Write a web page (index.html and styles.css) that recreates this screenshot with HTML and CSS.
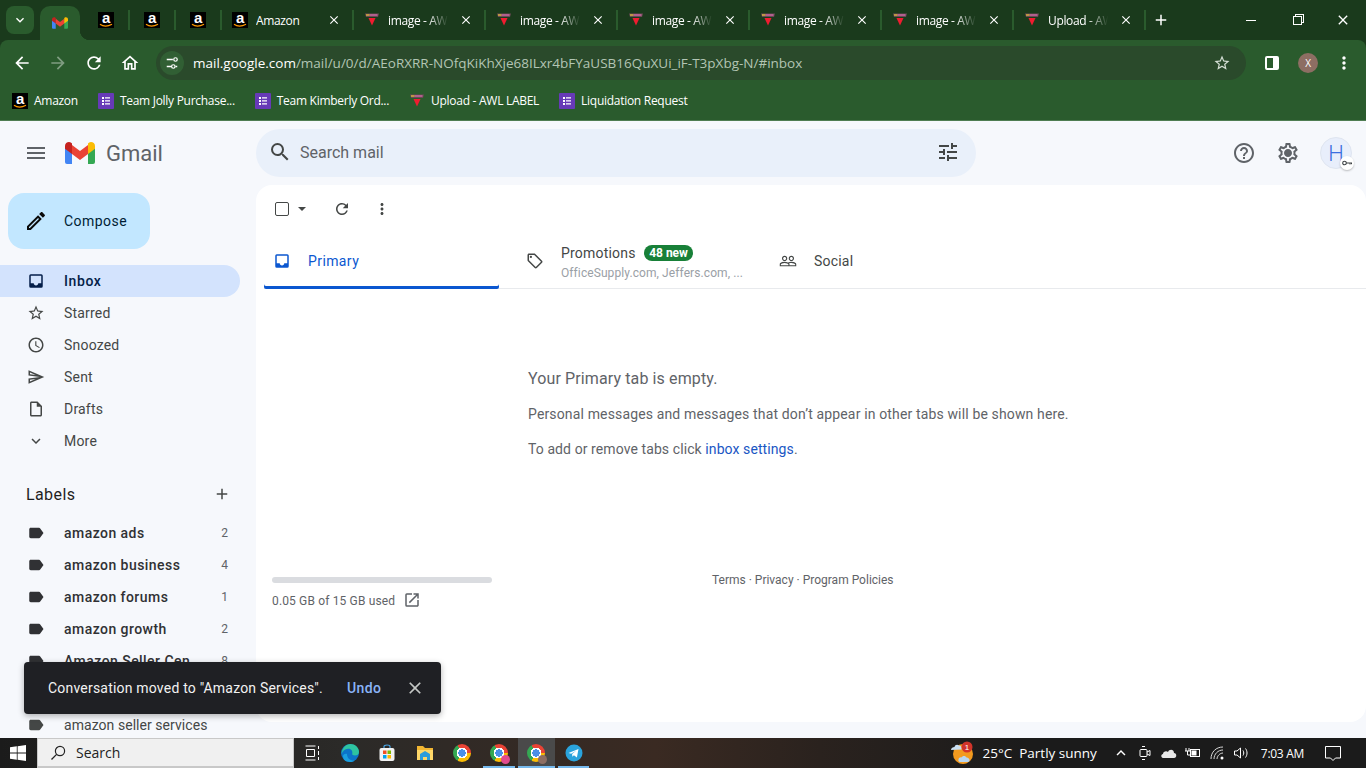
FILE: index.html
```html
<!DOCTYPE html>
<html lang="en">
<head>
    <meta charset="UTF-8">
    <meta name="viewport" content="width=device-width, initial-scale=1.0">
    <title>Gmail - Inbox</title>
    <link rel="stylesheet" href="styles.css">
</head>
<body>
    <svg class="sprite" xmlns="http://www.w3.org/2000/svg">
        <symbol id="i-back" viewBox="0 0 24 24"><path d="M20 11H7.83l5.59-5.59L12 4l-8 8 8 8 1.41-1.41L7.83 13H20v-2z"/></symbol>
        <symbol id="i-forward" viewBox="0 0 24 24"><path d="M12 4l-1.41 1.41L16.17 11H4v2h12.17l-5.58 5.59L12 20l8-8z"/></symbol>
        <symbol id="i-refresh" viewBox="0 0 24 24"><path d="M17.65 6.35A7.958 7.958 0 0 0 12 4c-4.42 0-7.99 3.58-7.99 8s3.57 8 7.99 8c3.73 0 6.84-2.55 7.73-6h-2.08A5.99 5.99 0 0 1 12 18c-3.31 0-6-2.69-6-6s2.69-6 6-6c1.66 0 3.14.69 4.22 1.78L13 11h7V4l-2.35 2.35z"/></symbol>
        <symbol id="i-home" viewBox="0 0 24 24"><path d="M12 5.69l5 4.5V18h-2v-6H9v6H7v-7.81l5-4.5M12 3L2 12h3v8h6v-6h2v6h6v-8h3L12 3z"/></symbol>
        <symbol id="i-star" viewBox="0 0 24 24"><path d="M22 9.24l-7.19-.62L12 2 9.19 8.63 2 9.24l5.46 4.73L5.82 21 12 17.27 18.18 21l-1.63-7.03L22 9.24zM12 15.4l-3.76 2.27 1-4.28-3.32-2.88 4.38-.38L12 6.1l1.71 4.04 4.38.38-3.32 2.88 1 4.28L12 15.4z"/></symbol>
        <symbol id="i-close" viewBox="0 0 24 24"><path d="M19 6.41L17.59 5 12 10.59 6.41 5 5 6.41 10.59 12 5 17.59 6.41 19 12 13.41 17.59 19 19 17.59 13.41 12z"/></symbol>
        <symbol id="i-add" viewBox="0 0 24 24"><path d="M19 13h-6v6h-2v-6H5v-2h6V5h2v6h6v2z"/></symbol>
        <symbol id="i-dots" viewBox="0 0 24 24"><path d="M12 8c1.1 0 2-.9 2-2s-.9-2-2-2-2 .9-2 2 .9 2 2 2zm0 2c-1.1 0-2 .9-2 2s.9 2 2 2 2-.9 2-2-.9-2-2-2zm0 6c-1.1 0-2 .9-2 2s.9 2 2 2 2-.9 2-2-.9-2-2-2z"/></symbol>
        <symbol id="i-chevron" viewBox="0 0 24 24"><path d="M16.59 8.59L12 13.17 7.41 8.59 6 10l6 6 6-6z"/></symbol>
        <symbol id="i-menu" viewBox="0 0 24 24"><path d="M3 18h18v-2H3v2zm0-5h18v-2H3v2zm0-7v2h18V6H3z"/></symbol>
        <symbol id="i-search" viewBox="0 0 24 24"><path d="M15.5 14h-.79l-.28-.27A6.471 6.471 0 0 0 16 9.5 6.5 6.5 0 1 0 9.5 16c1.61 0 3.09-.59 4.23-1.57l.27.28v.79l5 4.99L20.49 19l-4.99-5zm-6 0C7.01 14 5 11.99 5 9.5S7.01 5 9.5 5 14 7.01 14 9.5 11.99 14 9.5 14z"/></symbol>
        <symbol id="i-tune" viewBox="0 0 24 24"><path d="M3 17v2h6v-2H3zM3 5v2h10V5H3zm10 16v-2h8v-2h-8v-2h-2v6h2zM7 9v2H3v2h4v2h2V9H7zm14 4v-2H11v2h10zm-6-4h2V7h4V5h-4V3h-2v6z"/></symbol>
        <symbol id="i-help" viewBox="0 0 24 24"><path d="M11 18h2v-2h-2v2zm1-16C6.48 2 2 6.48 2 12s4.48 10 10 10 10-4.48 10-10S17.52 2 12 2zm0 18c-4.41 0-8-3.59-8-8s3.59-8 8-8 8 3.59 8 8-3.59 8-8 8zm0-14c-2.21 0-4 1.79-4 4h2c0-1.1.9-2 2-2s2 .9 2 2c0 2-3 1.75-3 5h2c0-2.25 3-2.5 3-5 0-2.21-1.79-4-4-4z"/></symbol>
        <symbol id="i-gear" viewBox="0 0 24 24"><path d="M19.43 12.98c.04-.32.07-.64.07-.98 0-.34-.03-.66-.07-.98l2.11-1.65c.19-.15.24-.42.12-.64l-2-3.46a.5.5 0 0 0-.61-.22l-2.49 1c-.52-.4-1.08-.73-1.69-.98l-.38-2.65A.488.488 0 0 0 14 2h-4c-.25 0-.46.18-.49.42l-.38 2.65c-.61.25-1.17.59-1.69.98l-2.49-1a.566.566 0 0 0-.18-.03c-.17 0-.34.09-.43.25l-2 3.46c-.13.22-.07.49.12.64l2.11 1.65c-.04.32-.07.65-.07.98 0 .33.03.66.07.98l-2.11 1.65c-.19.15-.24.42-.12.64l2 3.46a.5.5 0 0 0 .61.22l2.49-1c.52.4 1.08.73 1.69.98l.38 2.65c.03.24.24.42.49.42h4c.25 0 .46-.18.49-.42l.38-2.65c.61-.25 1.17-.59 1.69-.98l2.49 1c.06.02.12.03.18.03.17 0 .34-.09.43-.25l2-3.46c.12-.22.07-.49-.12-.64l-2.11-1.65zm-1.98-1.71c.04.31.05.52.05.73 0 .21-.02.43-.05.73l-.14 1.13.89.7 1.08.84-.7 1.21-1.27-.51-1.04-.42-.9.68c-.43.32-.84.56-1.25.73l-1.06.43-.16 1.13-.2 1.35h-1.4l-.19-1.35-.16-1.13-1.06-.43c-.43-.18-.83-.41-1.23-.71l-.91-.7-1.06.43-1.27.51-.7-1.21 1.08-.84.89-.7-.14-1.13c-.03-.31-.05-.54-.05-.74s.02-.43.05-.73l.14-1.13-.89-.7-1.08-.84.7-1.21 1.27.51 1.04.42.9-.68c.43-.32.84-.56 1.25-.73l1.06-.43.16-1.13.2-1.35h1.39l.19 1.35.16 1.13 1.06.43c.43.18.83.41 1.23.71l.91.7 1.06-.43 1.27-.51.7 1.21-1.07.85-.89.7.14 1.13zM12 8c-2.21 0-4 1.79-4 4s1.79 4 4 4 4-1.79 4-4-1.79-4-4-4z"/></symbol>
        <symbol id="i-edit" viewBox="0 0 24 24"><path d="M3 17.25V21h3.75L17.81 9.94l-3.75-3.75L3 17.25zM5.92 19H5v-.92l9.06-9.06.92.92L5.92 19zM20.71 5.63l-2.34-2.34c-.2-.2-.45-.29-.71-.29s-.51.1-.7.29l-1.83 1.83 3.75 3.75 1.83-1.83c.39-.39.39-1.02 0-1.41z"/></symbol>
        <symbol id="i-inbox" viewBox="0 0 24 24"><path fill-rule="evenodd" d="M19 3H5a2 2 0 0 0-2 2v14a2 2 0 0 0 2 2h14a2 2 0 0 0 2-2V5a2 2 0 0 0-2-2zm0 12h-4c0 1.66-1.35 3-3 3s-3-1.34-3-3H5V5h14v10z"/></symbol>
        <symbol id="i-clock" viewBox="0 0 24 24"><path d="M11.99 2C6.47 2 2 6.48 2 12s4.47 10 9.99 10C17.52 22 22 17.52 22 12S17.52 2 11.99 2zM12 20c-4.42 0-8-3.58-8-8s3.58-8 8-8 8 3.58 8 8-3.58 8-8 8zm.5-13H11v6l5.25 3.15.75-1.23-4.5-2.67z"/></symbol>
        <symbol id="i-send" viewBox="0 0 24 24"><path d="M4.01 6.03l7.51 3.22-7.52-1 .01-2.22m7.5 8.72L4 17.97v-2.22l7.51-1M2.01 3L2 10l15 2-15 2 .01 7L23 12 2.01 3z"/></symbol>
        <symbol id="i-draft" viewBox="0 0 24 24"><path d="M14 2H6c-1.1 0-2 .9-2 2v16c0 1.1.9 2 2 2h12c1.1 0 2-.9 2-2V8l-6-6zM6 20V4h7v5h5v11H6z"/></symbol>
        <symbol id="i-label" viewBox="0 0 24 24"><path d="M17.63 5.84C17.27 5.33 16.67 5 16 5L5 5.01C3.9 5.01 3 5.9 3 7v10c0 1.1.9 1.99 2 1.99L16 19c.67 0 1.27-.33 1.63-.84L22 12l-4.37-6.16z"/></symbol>
        <symbol id="i-tag" viewBox="0 0 24 24"><path d="M21.41 11.58l-9-9C12.05 2.22 11.55 2 11 2H4c-1.1 0-2 .9-2 2v7c0 .55.22 1.05.59 1.42l9 9c.36.36.86.58 1.41.58s1.05-.22 1.41-.59l7-7c.37-.36.59-.86.59-1.41s-.23-1.06-.59-1.42zM13 20.01L4 11V4h7v-.01l9 9-7 7.02z"/><circle cx="6.5" cy="6.5" r="1.5"/></symbol>
        <symbol id="i-people" viewBox="0 0 24 24"><path d="M16.5 13c-1.2 0-3.07.34-4.5 1-1.43-.67-3.3-1-4.5-1C5.33 13 1 14.08 1 16.25V19h22v-2.75c0-2.17-4.33-3.25-6.5-3.25zm-4 4.5h-10v-1.25c0-.54 2.56-1.75 5-1.75s5 1.21 5 1.75v1.25zm9 0H14v-1.25c0-.46-.2-.86-.52-1.22.88-.3 1.96-.53 3.02-.53 2.44 0 5 1.21 5 1.75v1.25zM7.5 12c1.93 0 3.5-1.57 3.5-3.5S9.43 5 7.5 5 4 6.57 4 8.5 5.57 12 7.5 12zm0-5.5c1.1 0 2 .9 2 2s-.9 2-2 2-2-.9-2-2 .9-2 2-2zm9 5.5c1.93 0 3.5-1.57 3.5-3.5S18.43 5 16.5 5 13 6.57 13 8.5s1.57 3.5 3.5 3.5zm0-5.5c1.1 0 2 .9 2 2s-.9 2-2 2-2-.9-2-2 .9-2 2-2z"/></symbol>
        <symbol id="i-open" viewBox="0 0 24 24"><path d="M19 19H5V5h7V3H5a2 2 0 0 0-2 2v14a2 2 0 0 0 2 2h14c1.1 0 2-.9 2-2v-7h-2v7zM14 3v2h3.59l-9.83 9.83 1.41 1.41L19 6.41V10h2V3h-7z"/></symbol>
        <symbol id="i-gmail" viewBox="0 0 30 22">
            <path fill="#4285f4" d="M0 5h7v17H2a2 2 0 0 1-2-2z"/>
            <path fill="#34a853" d="M23 5h7v15a2 2 0 0 1-2 2h-5z"/>
            <path fill="#ea4335" d="M7 3l8 6 8-6v9l-8 6-8-6z"/>
            <path fill="#c5221f" d="M0 4c0-3.500 4-5 6.500-3L7 1.500V12L0 6.800z"/>
            <path fill="#fbbc04" d="M30 4c0-3.500-4-5-6.500-3l-.5.5V12l7-5.200z"/>
        </symbol>
        <symbol id="i-amazon" viewBox="0 0 16 16">
            <rect width="16" height="16" fill="#000"/>
            <text x="8" y="10.500" text-anchor="middle" font-family="Liberation Sans, sans-serif" font-weight="700" font-size="15" fill="#fff">a</text>
            <path d="M2 12.300c3 2.200 8 2.200 12 0" fill="none" stroke="#f90" stroke-width="1.200"/>
        </symbol>
        <symbol id="i-awl" viewBox="0 0 16 16">
            <path fill="#6a4a55" d="M1 1.500h14l-1 3.500H2z"/>
            <path fill="#d06aa8" d="M5.500 2.300h8v1.400h-8z"/>
            <path fill="#e0b840" d="M2 2.300h3.500v1.400H2z"/>
            <path fill="#f01c30" d="M4.500 6h7L8 13.500z"/>
        </symbol>
        <symbol id="i-forms" viewBox="0 0 16 16">
            <rect width="16" height="16" rx="1" fill="#673ab7"/>
            <path fill="#fff" d="M4 4h2v2H4zM7 4.300h5v1.300H7zM4 7h2v2H4zM7 7.300h5v1.300H7zM4 10h2v2H4zM7 10.300h5v1.300H7z"/>
        </symbol>
    </svg>

    <header class="browser">
        <div class="tab-strip">
            <div class="tab-search"><svg class="ic ic-14"><use href="#i-chevron"/></svg></div>
            <div class="tab-active"><svg class="fav-gmail"><use href="#i-gmail"/></svg></div>
            <div class="tab-list">
                <div class="tab tab-small"><svg class="fav"><use href="#i-amazon"/></svg></div>
                <div class="tab tab-small"><svg class="fav"><use href="#i-amazon"/></svg></div>
                <div class="tab tab-small"><svg class="fav"><use href="#i-amazon"/></svg></div>
                <div class="tab"><svg class="fav"><use href="#i-amazon"/></svg><span class="tab-title">Amazon</span><svg class="ic tab-close"><use href="#i-close"/></svg></div>
                <div class="tab"><svg class="fav"><use href="#i-awl"/></svg><span class="tab-title fade">image - AWL</span><svg class="ic tab-close"><use href="#i-close"/></svg></div>
                <div class="tab"><svg class="fav"><use href="#i-awl"/></svg><span class="tab-title fade">image - AWL</span><svg class="ic tab-close"><use href="#i-close"/></svg></div>
                <div class="tab"><svg class="fav"><use href="#i-awl"/></svg><span class="tab-title fade">image - AWL</span><svg class="ic tab-close"><use href="#i-close"/></svg></div>
                <div class="tab"><svg class="fav"><use href="#i-awl"/></svg><span class="tab-title fade">image - AWL</span><svg class="ic tab-close"><use href="#i-close"/></svg></div>
                <div class="tab"><svg class="fav"><use href="#i-awl"/></svg><span class="tab-title fade">image - AWL</span><svg class="ic tab-close"><use href="#i-close"/></svg></div>
                <div class="tab"><svg class="fav"><use href="#i-awl"/></svg><span class="tab-title fade">Upload - AWL</span><svg class="ic tab-close"><use href="#i-close"/></svg></div>
            </div>
            <svg class="ic new-tab"><use href="#i-add"/></svg>
            <div class="win-controls">
                <div class="win-btn"><span class="win-min"></span></div>
                <div class="win-btn"><span class="win-restore"></span></div>
                <div class="win-btn"><svg class="ic win-close"><use href="#i-close"/></svg></div>
            </div>
        </div>

        <div class="toolbar">
            <svg class="ic nav-btn"><use href="#i-back"/></svg>
            <svg class="ic nav-btn nav-off"><use href="#i-forward"/></svg>
            <svg class="ic nav-btn"><use href="#i-refresh"/></svg>
            <svg class="ic nav-btn"><use href="#i-home"/></svg>
            <div class="omnibox">
                <span class="site-info">
                    <svg viewBox="0 0 16 16" class="site-tune"><path d="M2 4h7M12 12h2M2 12h5" stroke="#fff" stroke-width="1.500" fill="none"/><circle cx="12" cy="4" r="2" fill="none" stroke="#fff" stroke-width="1.400"/><circle cx="9.500" cy="12" r="2" fill="none" stroke="#fff" stroke-width="1.400"/></svg>
                </span>
                <span class="url"><span class="url-host">mail.google.com</span>/mail/u/0/d/AEoRXRR-NOfqKiKhXje68ILxr4bFYaUSB16QuXUi_iF-T3pXbg-N/#inbox</span>
                <svg class="ic omni-star"><use href="#i-star"/></svg>
            </div>
            <span class="side-panel"></span>
            <span class="profile">X</span>
            <svg class="ic chrome-menu"><use href="#i-dots"/></svg>
        </div>

        <nav class="bookmarks">
            <a class="bookmark"><svg class="fav"><use href="#i-amazon"/></svg>Amazon</a>
            <a class="bookmark"><svg class="fav"><use href="#i-forms"/></svg>Team Jolly Purchase...</a>
            <a class="bookmark"><svg class="fav"><use href="#i-forms"/></svg>Team Kimberly Ord...</a>
            <a class="bookmark"><svg class="fav"><use href="#i-awl"/></svg>Upload - AWL LABEL</a>
            <a class="bookmark"><svg class="fav"><use href="#i-forms"/></svg>Liquidation Request</a>
        </nav>
    </header>

    <div class="gmail">
        <div class="gm-head">
            <div class="brand">
                <svg class="ic gm-menu"><use href="#i-menu"/></svg>
                <svg class="gm-logo"><use href="#i-gmail"/></svg>
                <span class="gm-word">Gmail</span>
            </div>
            <div class="search">
                <svg class="ic search-ic"><use href="#i-search"/></svg>
                <span class="search-text">Search mail</span>
                <svg class="ic search-tune"><use href="#i-tune"/></svg>
            </div>
            <div class="head-actions">
                <svg class="ic head-ic"><use href="#i-help"/></svg>
                <svg class="ic head-ic"><use href="#i-gear"/></svg>
                <div class="account">H
                    <span class="key-badge">
                        <svg viewBox="0 0 12 12"><circle cx="3.500" cy="6" r="1.800" fill="none" stroke="#3c4043" stroke-width="1.100"/><path d="M5 6h6M9 6v1.500M10.500 6v1.200" stroke="#3c4043" stroke-width="1" fill="none"/></svg>
                    </span>
                </div>
            </div>
        </div>

        <div class="gm-body">
            <aside class="sidebar">
                <div class="compose"><svg class="ic compose-ic"><use href="#i-edit"/></svg>Compose</div>
                <ul class="nav-list">
                    <li class="nav-row active"><svg class="ic row-ic"><use href="#i-inbox"/></svg>Inbox</li>
                    <li class="nav-row"><svg class="ic row-ic"><use href="#i-star"/></svg>Starred</li>
                    <li class="nav-row"><svg class="ic row-ic"><use href="#i-clock"/></svg>Snoozed</li>
                    <li class="nav-row"><svg class="ic row-ic"><use href="#i-send"/></svg>Sent</li>
                    <li class="nav-row"><svg class="ic row-ic"><use href="#i-draft"/></svg>Drafts</li>
                    <li class="nav-row"><svg class="ic row-ic"><use href="#i-chevron"/></svg>More</li>
                </ul>
                <div class="labels-head">Labels<svg class="ic labels-add"><use href="#i-add"/></svg></div>
                <ul class="nav-list">
                    <li class="nav-row bold"><svg class="ic row-ic"><use href="#i-label"/></svg>amazon ads<span class="count">2</span></li>
                    <li class="nav-row bold"><svg class="ic row-ic"><use href="#i-label"/></svg>amazon business<span class="count">4</span></li>
                    <li class="nav-row bold"><svg class="ic row-ic"><use href="#i-label"/></svg>amazon forums<span class="count">1</span></li>
                    <li class="nav-row bold"><svg class="ic row-ic"><use href="#i-label"/></svg>amazon growth<span class="count">2</span></li>
                    <li class="nav-row bold"><svg class="ic row-ic"><use href="#i-label"/></svg>Amazon Seller Cen<span class="count">8</span></li>
                    <li class="nav-row"><svg class="ic row-ic"><use href="#i-label"/></svg></li>
                    <li class="nav-row plain"><svg class="ic row-ic"><use href="#i-label"/></svg>amazon seller services</li>
                </ul>
            </aside>

            <main class="panel">
                <div class="list-tools">
                    <span class="checkbox"></span>
                    <span class="caret"></span>
                    <svg class="ic tool-refresh"><use href="#i-refresh"/></svg>
                    <svg class="ic tool-dots"><use href="#i-dots"/></svg>
                </div>
                <div class="inbox-tabs">
                    <div class="inbox-tab tab-primary"><svg class="ic tab-ic"><use href="#i-inbox"/></svg>Primary</div>
                    <div class="inbox-tab tab-promo">
                        <svg class="ic tab-ic"><use href="#i-tag"/></svg>
                        <div class="promo-text">
                            <div class="promo-top">Promotions <span class="new-badge">48 new</span></div>
                            <div class="promo-snippet">OfficeSupply.com, Jeffers.com, ...</div>
                        </div>
                    </div>
                    <div class="inbox-tab tab-social"><svg class="ic tab-ic"><use href="#i-people"/></svg>Social</div>
                </div>
                <div class="empty">
                    <p class="empty-title">Your Primary tab is empty.</p>
                    <p class="empty-line line-long">Personal messages and messages that don’t appear in other tabs will be shown here.</p>
                    <p class="empty-line">To add or remove tabs click <a class="link">inbox settings</a>.</p>
                </div>
                <div class="panel-foot">
                    <div class="storage">
                        <div class="storage-bar"></div>
                        <div class="storage-text">0.05 GB of 15 GB used<svg class="ic storage-open"><use href="#i-open"/></svg></div>
                    </div>
                    <div class="policies">Terms · Privacy · Program Policies</div>
                </div>
            </main>
        </div>

        <div class="toast">
            <span class="toast-msg">Conversation moved to "Amazon Services".</span>
            <span class="toast-undo">Undo</span>
            <svg class="ic toast-close"><use href="#i-close"/></svg>
        </div>
    </div>

    <footer class="taskbar">
        <div class="start">
            <svg viewBox="0 0 16 16" width="16" height="16"><path fill="#fff" d="M0 2.300l6.800-1v6.300H0zM7.600 1.200L16 0v7.600H7.600zM0 8.400h6.800v6.300l-6.800-1zM7.600 8.400H16V16l-8.400-1.200z"/></svg>
        </div>
        <div class="task-search">
            <svg class="task-search-ic" viewBox="0 0 16 16"><circle cx="10" cy="6" r="4.600" fill="none" stroke="#222" stroke-width="1.200"/><path d="M6.600 9.400L1.500 14.500" stroke="#222" stroke-width="1.300"/></svg>
            Search
        </div>
        <div class="task-apps">
            <div class="app">
                <svg viewBox="0 0 16 16" width="16" height="16" fill="none" stroke="#fff"><path d="M0.500 1h10M0.500 15h10M1.500 4.500h8v7h-8zM13.500 1v3M13.500 6v4M13.500 12v3"/></svg>
            </div>
            <div class="app">
                <svg viewBox="0 0 20 20" width="20" height="20"><circle cx="10" cy="10" r="9" fill="#0c74c9"/><path d="M1.500 11C2 5 6 1 10.500 1c4.500 0 8.500 3.500 8.500 8 0 2.500-2 3.500-4 3.500-2 0-3-.8-2.800-1.500C13 8 11 5.500 8 5.800 5 6 2.500 8 1.500 11z" fill="#2ec4a0"/><path d="M7 11c0 4 3 7 8 6.500-2 1.500-3 1.500-5 1.500-5 0-7-3-7-6 0-1 2-3 4-2z" fill="#1a9fe0"/></svg>
            </div>
            <div class="app">
                <svg viewBox="0 0 18 18" width="18" height="18"><path d="M6 4V2.500C6 1.500 7 1 9 1s3 .5 3 1.500V4" fill="none" stroke="#4aa7e8" stroke-width="1.200"/><rect x="1.500" y="4" width="15" height="13" rx="2" fill="#f2f2f2"/><rect x="5" y="6.500" width="3.500" height="3.500" fill="#f25022"/><rect x="9.500" y="6.500" width="3.500" height="3.500" fill="#7fba00"/><rect x="5" y="11" width="3.500" height="3.500" fill="#00a4ef"/><rect x="9.500" y="11" width="3.500" height="3.500" fill="#ffb900"/></svg>
            </div>
            <div class="app">
                <svg viewBox="0 0 18 18" width="18" height="18"><path d="M1 2h6l2 2h8v12H1z" fill="#f2b632"/><path d="M1 6h16v10H1z" fill="#ffd768"/><path d="M4 10l5-3 5 3v6h-3v-3H7v3H4z" fill="#2d9cdb"/></svg>
            </div>
            <div class="app"><span class="chrome-logo"></span></div>
            <div class="app"><span class="chrome-logo"><span class="chrome-badge pink"></span></span></div>
            <div class="app app-current"><span class="chrome-logo"><span class="chrome-badge brown"></span></span></div>
            <div class="app">
                <svg viewBox="0 0 18 18" width="18" height="18"><circle cx="9" cy="9" r="8.500" fill="#2aa3dc"/><path d="M3.500 9L13.500 5l-1.600 8.500-3-2.200-1.500 1.400-.3-2.600 4-3.300-5 3z" fill="#fff"/></svg>
            </div>
        </div>
        <div class="tray">
            <svg class="weather" viewBox="0 0 24 24" width="24" height="24">
                <circle cx="13" cy="13" r="10" fill="#f39a1f"/>
                <path d="M1 9c0-2 2-3 3.500-3C5 4 7 3 9 4.500c2 0 3 2 2.500 4z" fill="#c9dff2"/>
                <path d="M10 21c-1 0-2-1-1.500-2.500 0-1.500 2-2.500 3-2 1-2 4-2 5 0 2 0 3 1.500 3 2.500S19 21 18 21z" fill="#b9d6f0"/>
                <circle cx="17" cy="6" r="5.500" fill="#d1342a"/>
                <text x="17" y="9" text-anchor="middle" font-size="8" font-family="Liberation Sans, sans-serif" fill="#fff">1</text>
            </svg>
            <span class="weather-text">25°C&nbsp; Partly sunny</span>
            <svg class="ic tray-chevron"><use href="#i-chevron"/></svg>
            <svg viewBox="0 0 16 16" width="16" height="16" fill="none" stroke="#fff" class="tray-ic"><rect x="3" y="4.500" width="7" height="7" rx="1"/><path d="M10 7l3-1.500v5L10 9M5 1.500h3M5 14.500h3"/></svg>
            <svg viewBox="0 0 16 16" width="16" height="16" class="tray-ic"><path d="M2 13c-2 0-2.500-3.500 0-4 0-3 4-3.500 5-2 1-3 6-3 6 1 3 0 3 5 0 5z" fill="#e8e8e8"/></svg>
            <svg viewBox="0 0 16 16" width="16" height="16" fill="none" stroke="#fff" class="tray-ic"><rect x="5.500" y="4.500" width="9" height="7"/><rect x="7" y="6" width="4" height="4" fill="#fff"/><path d="M1 3v3M4 3v3M0 6h5M2.500 6v4h3"/></svg>
            <svg viewBox="0 0 16 16" width="16" height="16" fill="none" stroke="#d8d8d8" class="tray-ic"><path d="M2 14C2 7 7 2 14 2M5 14c0-5 4-9 9-9M8 14c0-3 3-6 6-6" stroke-width="1"/><circle cx="13" cy="13" r="1.500" fill="#fff" stroke="none"/></svg>
            <svg viewBox="0 0 16 16" width="16" height="16" fill="none" stroke="#fff" class="tray-ic"><path d="M1.500 6h2.500l3.500-3v10L4 10H1.500zM10 5.500c1 1.500 1 3.500 0 5M12.500 3.500c2 2.500 2 6.500 0 9"/></svg>
            <span class="clock">7:03 AM</span>
            <svg viewBox="0 0 18 18" width="18" height="18" fill="none" stroke="#fff" class="notify"><path d="M1.500 2.500h15v11.500h-5l-2.500 2.500-2.500-2.500h-5z"/></svg>
        </div>
    </footer>
</body>
</html>
```

FILE: styles.css
```css
* {
    box-sizing: border-box;
}
html, body {
    margin: 0;
    padding: 0;
    height: 768px;
    overflow: hidden;
}
body {
    display: flex;
    flex-direction: column;
    font-family: Roboto, "Liberation Sans", sans-serif;
    font-size: 14px;
    color: #444746;
    background-color: #f6f8fc;
}
ul {
    list-style-type: none;
    margin: 0;
    padding: 0;
}
p {
    margin: 0;
}
svg {
    display: block;
    flex-shrink: 0;
}
.sprite {
    width: 0;
    height: 0;
    position: absolute;
}
.ic {
    fill: currentColor;
    width: 24px;
    height: 24px;
}
.ic-14 {
    width: 16px;
    height: 16px;
}
.fav {
    width: 16px;
    height: 16px;
}

/* browser chrome */
.browser {
    height: 121px;
    flex-shrink: 0;
    background-color: #1a3a1c;
    color: #fff;
    font-family: "Open Sans", "Liberation Sans", sans-serif;
    font-size: 12px;
    letter-spacing: -0.35px;
}
.tab-strip {
    display: flex;
    height: 40px;
    padding-left: 6px;
}
.tab-search {
    width: 28px;
    height: 28px;
    margin-top: 6px;
    border-radius: 8px;
    background-color: #2a5b2d;
    display: flex;
    align-items: center;
    justify-content: center;
}
.tab-active {
    position: relative;
    width: 40px;
    height: 34px;
    margin-top: 6px;
    margin-left: 6px;
    border-radius: 10px 10px 0 0;
    background-color: #2a5b2d;
    display: flex;
    align-items: center;
    justify-content: center;
}
.tab-active::after {
    content: "";
    position: absolute;
    right: -10px;
    bottom: 0;
    width: 10px;
    height: 10px;
    background: radial-gradient(circle at 100% 0, transparent 10px, #2a5b2d 10.5px);
}
.fav-gmail {
    width: 16px;
    height: 12px;
}
.tab-list {
    display: flex;
    margin-left: 4px;
}
.tab {
    width: 132px;
    height: 20px;
    margin-top: 10px;
    padding-left: 10px;
    padding-right: 10px;
    display: flex;
    align-items: center;
    border-right: 2px solid #2a5b2d;
}
.tab-small {
    width: 46px;
    padding-left: 14px;
}
.tab-title {
    width: 64px;
    margin-left: 8px;
    margin-right: 7px;
    white-space: nowrap;
    overflow: hidden;
}
.fade {
    -webkit-mask-image: linear-gradient(90deg, #000 62%, transparent 94%);
    mask-image: linear-gradient(90deg, #000 62%, transparent 94%);
}
.tab-close {
    width: 14px;
    height: 14px;
}
.new-tab {
    width: 18px;
    height: 18px;
    margin-top: 11px;
    margin-left: 6px;
}
.win-controls {
    display: flex;
    margin-left: auto;
}
.win-btn {
    width: 46px;
    height: 40px;
    display: flex;
    align-items: center;
    justify-content: center;
}
.win-min {
    width: 10px;
    height: 1px;
    background-color: #fff;
}
.win-restore {
    width: 9px;
    height: 9px;
    border: 1px solid #fff;
    box-shadow: 2px -2px 0 -1px #1a3a1c, 2px -2px 0 0 #fff;
}
.win-close {
    width: 16px;
    height: 16px;
}
.toolbar {
    height: 46px;
    display: flex;
    align-items: center;
    padding-left: 12px;
    background-color: #2a5b2d;
    border-radius: 8px 8px 0 0;
}
.nav-btn {
    width: 20px;
    height: 20px;
    margin-right: 16px;
}
.nav-off {
    opacity: 0.4;
}
.omnibox {
    width: 1090px;
    height: 34px;
    display: flex;
    align-items: center;
    border-radius: 17px;
    background-color: #2a4a2b;
}
.site-info {
    width: 24px;
    height: 24px;
    margin-left: 4px;
    border-radius: 50%;
    background-color: #315f34;
    display: flex;
    align-items: center;
    justify-content: center;
}
.site-tune {
    width: 14px;
    height: 14px;
}
.url {
    margin-left: 9px;
    font-size: 13.5px;
    letter-spacing: 0;
    color: #b3c5b4;
    white-space: nowrap;
}
.url-host {
    color: #fff;
}
.omni-star {
    width: 18px;
    height: 18px;
    margin-left: auto;
    margin-right: 15px;
    color: #d5dfd5;
}
.side-panel {
    width: 14px;
    height: 14px;
    margin-left: 19px;
    border: 2px solid #fff;
    border-right-width: 6px;
    border-radius: 2px;
}
.profile {
    width: 20px;
    height: 20px;
    margin-left: 19px;
    border-radius: 50%;
    background-color: #8d6e63;
    font-size: 10px;
    display: flex;
    align-items: center;
    justify-content: center;
}
.chrome-menu {
    width: 20px;
    height: 20px;
    margin-left: 16px;
}
.bookmarks {
    height: 35px;
    display: flex;
    align-items: center;
    gap: 20px;
    padding-left: 12px;
    padding-bottom: 5px;
    background-color: #2a5b2d;
    border-bottom: 1px solid #4f7d52;
    letter-spacing: -0.28px;
}
.bookmark {
    display: flex;
    align-items: center;
    gap: 6px;
    white-space: nowrap;
}

/* gmail */
.gmail {
    position: relative;
    height: 617px;
    flex-shrink: 0;
    overflow: hidden;
}
.gm-head {
    height: 64px;
    display: flex;
    align-items: center;
}
.brand {
    width: 256px;
    display: flex;
    align-items: center;
    padding-left: 24px;
    color: #5f6368;
}
.gm-menu {
    color: #5f6368;
}
.gm-logo {
    width: 30px;
    height: 22px;
    margin-left: 17px;
}
.gm-word {
    margin-left: 11px;
    font-size: 22px;
    color: #5f6368;
}
.search {
    width: 720px;
    height: 48px;
    display: flex;
    align-items: center;
    padding: 0 16px 2px 12px;
    border-radius: 24px;
    background-color: #e9f0fa;
    color: #444746;
}
.search-text {
    margin-left: 8px;
    font-size: 16px;
    color: #5f6368;
}
.search-tune {
    margin-left: auto;
}
.head-actions {
    display: flex;
    align-items: center;
    gap: 20px;
    margin-left: auto;
    margin-right: 14px;
    color: #5f6368;
}
.account {
    position: relative;
    width: 32px;
    height: 32px;
    border-radius: 50%;
    border: 1px solid #dfe5f0;
    background-color: #e8eefb;
    color: #3b6fe0;
    font-size: 22px;
    font-weight: 300;
    display: flex;
    align-items: center;
    justify-content: center;
}
.key-badge {
    position: absolute;
    right: -3px;
    bottom: -2px;
    width: 14px;
    height: 14px;
    padding: 1px;
    border-radius: 50%;
    background-color: #fff;
    box-shadow: 0 1px 2px rgba(0, 0, 0, 0.25);
}
.gm-body {
    display: flex;
    height: 553px;
}
.sidebar {
    width: 256px;
    flex-shrink: 0;
    padding-top: 8px;
    overflow: hidden;
}
.compose {
    width: 142px;
    height: 56px;
    margin-left: 8px;
    margin-bottom: 16px;
    display: flex;
    align-items: center;
    border-radius: 16px;
    background-color: #c2e7ff;
    color: #001d35;
    letter-spacing: 0.45px;
}
.compose-ic {
    margin-left: 16px;
    margin-right: 16px;
    color: #0a0a0a;
}
.nav-row {
    width: 240px;
    height: 32px;
    display: flex;
    align-items: center;
    padding-left: 28px;
    padding-right: 12px;
    border-radius: 0 16px 16px 0;
    letter-spacing: 0.2px;
    white-space: nowrap;
}
.row-ic {
    width: 18px;
    height: 18px;
    margin-left: -1px;
    margin-right: 19px;
}
.active {
    background-color: #d3e3fd;
    color: #041e49;
    font-weight: 500;
    letter-spacing: 0.6px;
}
.bold {
    color: #303134;
    font-weight: 500;
    letter-spacing: 0.45px;
}
.plain {
    letter-spacing: 0.05px;
}
.count {
    margin-left: auto;
    font-size: 12px;
    font-weight: 400;
    letter-spacing: 0;
    color: #5f6368;
}
.labels-head {
    height: 32px;
    margin-top: 21px;
    margin-bottom: 7px;
    width: 240px;
    padding-left: 26px;
    padding-right: 9px;
    display: flex;
    align-items: center;
    justify-content: space-between;
    font-size: 16px;
    letter-spacing: 0.4px;
    color: #1f1f1f;
}
.labels-add {
    width: 18px;
    height: 18px;
    color: #444746;
}
.panel {
    flex: 1;
    height: 537px;
    border-radius: 16px;
    background-color: #fff;
}
.list-tools {
    height: 48px;
    display: flex;
    align-items: center;
    padding-left: 16px;
    color: #444746;
}
.checkbox {
    height: 14px;
    border: 1.5px solid #444746;
    border-radius: 2px;
    width: 14px;
    margin-left: 3px;
    margin-right: 3px;
}
.caret {
    width: 0;
    height: 0;
    margin-left: 6px;
    border-left: 4px solid transparent;
    border-right: 4px solid transparent;
    border-top: 4px solid #444746;
}
.tool-refresh {
    width: 18px;
    height: 18px;
    margin-left: 27px;
}
.tool-dots {
    width: 18px;
    height: 18px;
    margin-left: 22px;
}
.inbox-tabs {
    height: 56px;
    margin-left: 8px;
    display: flex;
    box-shadow: inset 0 -1px 0 #e8eaed;
}
.inbox-tab {
    display: flex;
    align-items: center;
    letter-spacing: 0.2px;
    color: #444746;
}
.tab-ic {
    width: 18px;
    height: 18px;
    margin-right: 17px;
}
.tab-primary {
    width: 235px;
    padding-left: 9px;
    color: #0b57d0;
    letter-spacing: 0.4px;
    box-shadow: inset 0 -3px 0 #0b57d0;
    border-radius: 0 0 2px 2px;
}
.tab-promo {
    width: 265px;
    padding-left: 27px;
}
.tab-social {
    padding-left: 15px;
}
.promo-text {
    margin-top: 2px;
}
.promo-top {
    display: flex;
    align-items: center;
    gap: 8px;
    height: 20px;
}
.new-badge {
    height: 16px;
    padding: 0 5.500px;
    border-radius: 8px;
    background-color: #188038;
    color: #fff;
    font-size: 12px;
    font-weight: 700;
    line-height: 16px;
    letter-spacing: 0;
}
.promo-snippet {
    margin-top: 2px;
    font-size: 12px;
    line-height: 16px;
    letter-spacing: 0.09px;
    color: #9aa0a6;
}
.empty {
    padding-left: 272px;
    padding-top: 80px;
    color: #5f6368;
    line-height: 20px;
    letter-spacing: 0.09px;
}
.empty-title {
    font-size: 16px;
    letter-spacing: 0.12px;
}
.empty-line {
    margin-top: 15px;
}
.line-long {
    letter-spacing: 0.145px;
}
.link {
    color: #1a56c4;
}
.panel-foot {
    display: flex;
    margin-top: 113px;
    padding-left: 16px;
    font-size: 12px;
    line-height: 16px;
    color: #5f6368;
}
.storage {
    width: 220px;
}
.storage-bar {
    height: 6px;
    margin-top: 5px;
    border-radius: 3px;
    background-color: #dadce0;
}
.storage-text {
    display: flex;
    align-items: center;
    margin-top: 10px;
    letter-spacing: 0.15px;
}
.storage-open {
    width: 18px;
    height: 18px;
    margin-left: 8px;
    margin-top: -2px;
}
.policies {
    margin-left: 220px;
}
.toast {
    position: absolute;
    left: 24px;
    bottom: 24px;
    width: 417px;
    height: 52px;
    display: flex;
    align-items: center;
    padding-left: 24px;
    border-radius: 4px;
    background-color: #1f2024;
    color: #f2f2f2;
    letter-spacing: 0.2px;
    box-shadow: 0 2px 6px rgba(0, 0, 0, 0.3);
}
.toast-undo {
    margin-left: 24px;
    color: #8ab4f8;
    font-weight: 500;
    letter-spacing: 0.4px;
}
.toast-close {
    width: 20px;
    height: 20px;
    margin-left: 24px;
    color: #c4c7c5;
}

/* windows taskbar */
.taskbar {
    height: 30px;
    flex-shrink: 0;
    display: flex;
    align-items: center;
    background: linear-gradient(90deg, #1b1b1b 0%, #2b2a28 25%, #3a2a22 48%, #2a221e 60%, #1b1b1b 75%);
    color: #fff;
    font-family: "Open Sans", "Liberation Sans", sans-serif;
}
.start {
    width: 36px;
    height: 30px;
    display: flex;
    align-items: center;
    justify-content: center;
}
.task-search {
    width: 257px;
    height: 30px;
    margin-left: 1px;
    padding-left: 12px;
    display: flex;
    align-items: center;
    gap: 10px;
    background-color: #f0f0f0;
    border: 1px solid #c8c8c8;
    border-bottom-width: 2px;
    color: #222;
    font-size: 14px;
}
.task-search-ic {
    width: 16px;
    height: 16px;
}
.task-apps {
    display: flex;
}
.app {
    position: relative;
    width: 37.300px;
    height: 30px;
    display: flex;
    align-items: center;
    justify-content: center;
}
.app:nth-child(n+6)::after {
    content: "";
    position: absolute;
    left: 3px;
    right: 3px;
    bottom: 0;
    height: 2px;
    background-color: #76b9ed;
}
.app-current {
    background-color: #4a4a4a;
}
.app-current::after {
    left: 0 !important;
    right: 0 !important;
}
.chrome-logo {
    position: relative;
    width: 18px;
    height: 18px;
    border-radius: 50%;
    background:
        radial-gradient(circle, #4a8fe7 0 29%, #fff 30% 42%, transparent 43%),
        conic-gradient(from -30deg, #ea4335 0 120deg, #fbbc04 120deg 240deg, #34a853 240deg 360deg);
}
.chrome-badge {
    position: absolute;
    right: -2px;
    bottom: -2px;
    width: 9px;
    height: 9px;
    border-radius: 50%;
}
.pink {
    background-color: #e24a8d;
}
.brown {
    background-color: #8d6e63;
}
.tray {
    display: flex;
    align-items: center;
    margin-left: auto;
    padding-right: 24px;
    font-size: 13px;
}
.weather {
    margin-right: 8px;
}
.weather-text {
    margin-right: 15px;
    font-size: 13.500px;
    white-space: nowrap;
}
.tray-chevron {
    width: 18px;
    height: 18px;
    transform: rotate(180deg);
    margin-right: 7px;
}
.tray-ic {
    margin-right: 8px;
}
.clock {
    margin-left: 4px;
    margin-right: 20px;
    font-size: 12px;
    letter-spacing: -0.3px;
    white-space: nowrap;
}
```
